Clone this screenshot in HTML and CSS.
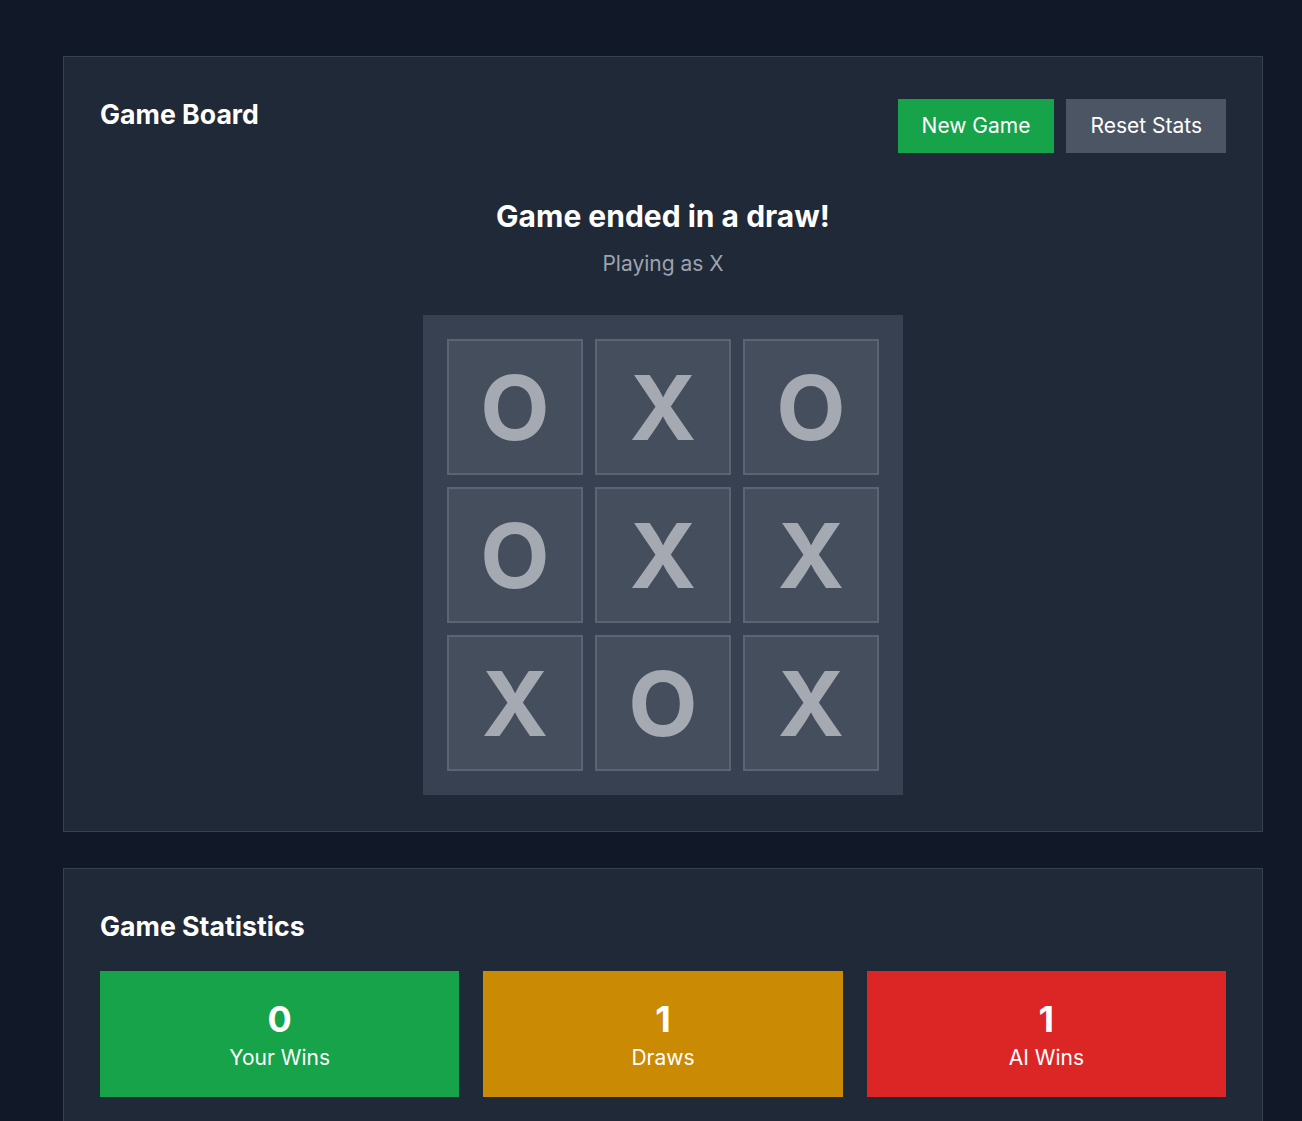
FILE: index.html
```html
<!DOCTYPE html>
<html lang="en">
<head>
	<meta charset="UTF-8">
	<title>Tic Tac Toe</title>
	<link rel="stylesheet" href="styles.css">
</head>
<body>
	<div class="page">
		<div class="card">
			<div class="card-head">
				<h2>Game Board</h2>
				<div class="actions">
					<button class="btn btn-green">New Game</button>
					<button class="btn btn-gray">Reset Stats</button>
				</div>
			</div>
			<div class="status">
				<h3>Game ended in a draw!</h3>
				<p>Playing as X</p>
			</div>
			<div class="board">
				<div class="cell">O</div>
				<div class="cell">X</div>
				<div class="cell">O</div>
				<div class="cell">O</div>
				<div class="cell">X</div>
				<div class="cell">X</div>
				<div class="cell">X</div>
				<div class="cell">O</div>
				<div class="cell">X</div>
			</div>
		</div>

		<div class="card">
			<h2>Game Statistics</h2>
			<div class="stats">
				<div class="stat stat-win">
					<div class="num">0</div>
					<div class="label">Your Wins</div>
				</div>
				<div class="stat stat-draw">
					<div class="num">1</div>
					<div class="label">Draws</div>
				</div>
				<div class="stat stat-loss">
					<div class="num">1</div>
					<div class="label">AI Wins</div>
				</div>
			</div>
		</div>
	</div>
</body>
</html>
```

FILE: styles.css
```css
* {
	margin: 0;
	padding: 0;
	box-sizing: border-box;
}
body {
	background: #111827;
	color: #fff;
	font-family: Inter, "Noto Sans", sans-serif;
}
.page {
	padding: 56px 39px 40px 63px;
	display: flex;
	flex-direction: column;
	gap: 36px;
}
.card {
	background: #1f2937;
	border: 1px solid #374151;
	padding: 36px;
}
h2 {
	font-size: 26.7px;
	line-height: 40px;
	font-weight: 700;
	padding-top: 1px;
}
.card-head {
	display: flex;
	justify-content: space-between;
	align-items: flex-start;
}
.actions {
	display: flex;
	gap: 12px;
	margin-top: 6px;
}
.btn {
	border: none;
	color: #fff;
	font-family: inherit;
	font-size: 21px;
	line-height: 30px;
	padding: 12px 24px;
	cursor: pointer;
}
.btn-green {
	background: #16a34a;
}
.btn-gray {
	background: #4b5563;
}
.status {
	text-align: center;
	margin-top: 45px;
}
.status h3 {
	font-size: 30px;
	line-height: 36px;
	font-weight: 700;
}
.status p {
	margin-top: 16px;
	font-size: 21px;
	line-height: 28px;
	color: #9ca3af;
}
.board {
	width: 480px;
	margin: 37px auto 0;
	background: #374151;
	padding: 24px;
	display: grid;
	grid-template-columns: repeat(3, 136px);
	grid-auto-rows: 136px;
	gap: 12px;
}
.cell {
	background: #454e5c;
	border: 2px solid #5b6472;
	color: #a5aab2;
	font-size: 90px;
	font-weight: 700;
	display: flex;
	align-items: center;
	justify-content: center;
}
.stats {
	display: grid;
	grid-template-columns: repeat(3, 1fr);
	gap: 24px;
	margin-top: 25px;
}
.stat {
	text-align: center;
	padding: 24px 16px;
}
.stat .num {
	font-size: 36px;
	line-height: 48px;
	font-weight: 700;
}
.stat .label {
	font-size: 21px;
	line-height: 30px;
}
.stat-win {
	background: #16a34a;
}
.stat-draw {
	background: #ca8a04;
}
.stat-loss {
	background: #dc2626;
}
```
